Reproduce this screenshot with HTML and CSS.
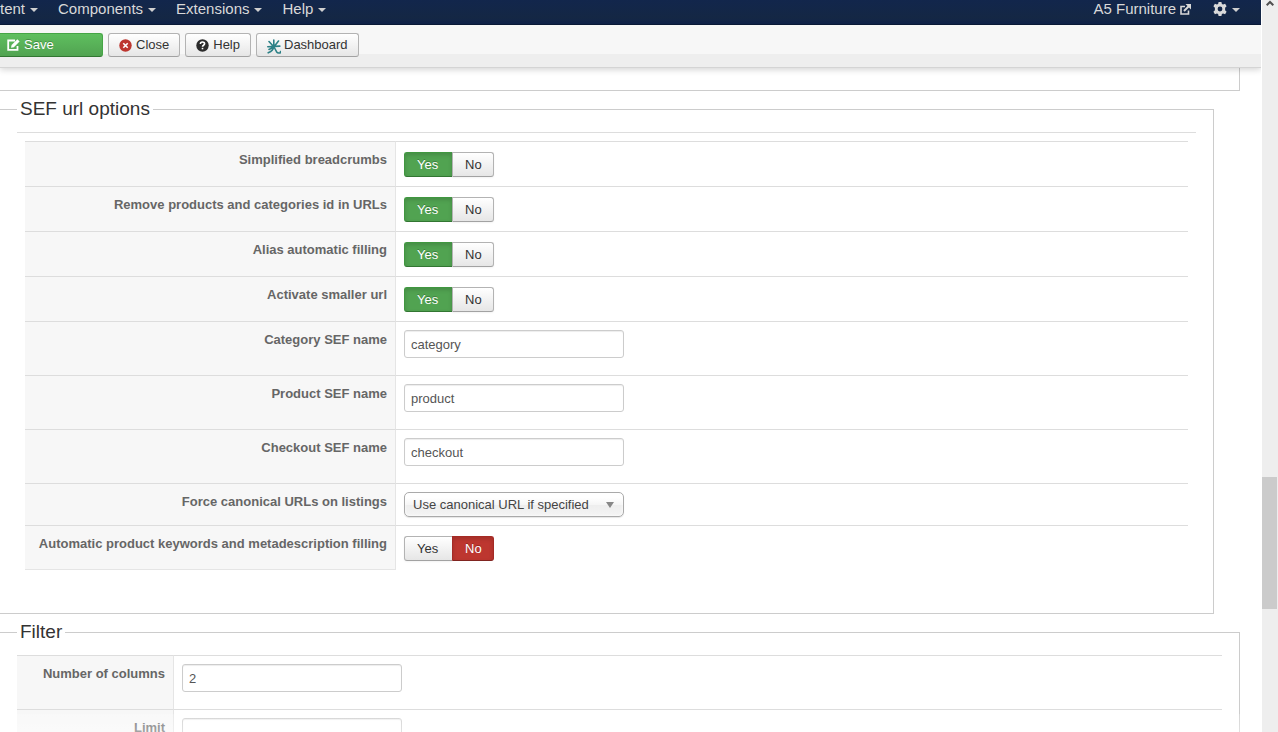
FILE: index.html
```
<!DOCTYPE html>
<html lang="en">
<head>
    <meta charset="UTF-8">
    <meta name="viewport" content="width=device-width, initial-scale=1.0">
    <title>Configuration</title>
    <link rel="stylesheet" href="styles.css">
</head>

<body>
    <div class="page">
        <nav class="navbar">
            <a href="#" class="nav-link">tent <span class="caret"></span></a>
            <a href="#" class="nav-link">Components <span class="caret"></span></a>
            <a href="#" class="nav-link">Extensions <span class="caret"></span></a>
            <a href="#" class="nav-link">Help <span class="caret"></span></a>
            <div class="nav-right">
                <a href="#" class="nav-link site-link">A5 Furniture
                    <svg width="11" height="11" viewBox="0 0 11 11" fill="none" stroke="currentColor">
                        <path d="M5 2.500H1v7.500h7.500V6.500" stroke-width="1.600"/>
                        <path d="M4 7l5-5" stroke-width="1.900"/>
                        <path d="M5.500 0H11v5.500z" fill="currentColor" stroke="none"/>
                    </svg>
                </a>
                <a href="#" class="nav-link" aria-label="Settings">
                    <svg width="14" height="14" viewBox="0 0 14 14" fill="currentColor" fill-rule="evenodd">
                        <path d="M5.600 0h2.800l.5 2 1.200.6 2-.8 1.500 2.400-1.500 1.500v2.600l1.500 1.500-1.500 2.400-2-.8-1.200.6-.5 2H5.600l-.5-2-1.200-.6-2 .8L.4 9.800l1.500-1.500V5.700L.4 4.200l1.500-2.400 2 .8L5.100 2zM7 4.600a2.400 2.400 0 1 0 0 4.800 2.400 2.400 0 0 0 0-4.800z"/>
                    </svg>
                    <span class="caret"></span>
                </a>
            </div>
        </nav>

        <div class="toolbar">
            <button type="button" class="btn btn-save">
                <svg width="13" height="12" viewBox="0 0 13 12" fill="none" stroke="currentColor">
                    <path d="M8 1.500H1.200v9.300h9.300V7" stroke-width="1.800"/>
                    <path d="M4 8.800l.6-2.800L10.400.3l2.200 2.100L6.800 8.200z" fill="currentColor" stroke="none"/>
                </svg>
                Save
            </button>
            <button type="button" class="btn">
                <svg width="13" height="13" viewBox="0 0 13 13">
                    <circle cx="6.500" cy="6.500" r="6.200" fill="#bd362f"/>
                    <path d="M4.300 4.300l4.400 4.400M8.700 4.300L4.300 8.700" stroke="#fff" stroke-width="1.600"/>
                </svg>
                Close
            </button>
            <button type="button" class="btn">
                <svg width="13" height="13" viewBox="0 0 13 13">
                    <circle cx="6.500" cy="6.500" r="6.200" fill="#2b2b2b"/>
                    <path d="M4.400 5c0-2.600 4.200-2.500 4.200-.2 0 1.500-2.100 1.400-2.100 2.900" fill="none" stroke="#fff" stroke-width="1.600"/>
                    <path d="M5.700 8.800h1.600v1.500H5.700z" fill="#fff"/>
                </svg>
                Help
            </button>
            <button type="button" class="btn btn-dashboard">
                <svg width="14" height="15" viewBox="0 0 14 15" fill="none" stroke="#2c8086" stroke-width="1.600" stroke-linecap="round">
                    <path d="M6.800 1v6.500M2 2.500l3.600 4M11.500 2L8 6.500M.8 7.700l12-.6M6.500 7.500c0 3-2 5-5.300 6.300M6.800 7.500l2.700 5.200c1 1.500 2.500 1.500 4 1v-1.200M5 9l-3 1.500"/>
                </svg>
                Dashboard
            </button>
        </div>

        <main class="content">
            <div class="panel-end"></div>

            <fieldset class="panel panel-nested">
                <legend>SEF url options</legend>
                <div class="panel-inner">
                    <table class="options sef-options">
                        <tr>
                            <th scope="row">Simplified breadcrumbs</th>
                            <td>
                                <div class="toggle" role="radiogroup" aria-label="Simplified breadcrumbs">
                                    <input type="radio" name="breadcrumbs" id="breadcrumbs_yes" value="1" checked>
                                    <label for="breadcrumbs_yes" class="yes">Yes</label>
                                    <input type="radio" name="breadcrumbs" id="breadcrumbs_no" value="0">
                                    <label for="breadcrumbs_no" class="no">No</label>
                                </div>
                            </td>
                        </tr>
                        <tr>
                            <th scope="row">Remove products and categories id in URLs</th>
                            <td>
                                <div class="toggle" role="radiogroup" aria-label="Remove products and categories id in URLs">
                                    <input type="radio" name="remove_id" id="remove_id_yes" value="1" checked>
                                    <label for="remove_id_yes" class="yes">Yes</label>
                                    <input type="radio" name="remove_id" id="remove_id_no" value="0">
                                    <label for="remove_id_no" class="no">No</label>
                                </div>
                            </td>
                        </tr>
                        <tr>
                            <th scope="row">Alias automatic filling</th>
                            <td>
                                <div class="toggle" role="radiogroup" aria-label="Alias automatic filling">
                                    <input type="radio" name="alias" id="alias_yes" value="1" checked>
                                    <label for="alias_yes" class="yes">Yes</label>
                                    <input type="radio" name="alias" id="alias_no" value="0">
                                    <label for="alias_no" class="no">No</label>
                                </div>
                            </td>
                        </tr>
                        <tr>
                            <th scope="row">Activate smaller url</th>
                            <td>
                                <div class="toggle" role="radiogroup" aria-label="Activate smaller url">
                                    <input type="radio" name="smaller_url" id="smaller_url_yes" value="1" checked>
                                    <label for="smaller_url_yes" class="yes">Yes</label>
                                    <input type="radio" name="smaller_url" id="smaller_url_no" value="0">
                                    <label for="smaller_url_no" class="no">No</label>
                                </div>
                            </td>
                        </tr>
                        <tr>
                            <th scope="row"><label for="category_sef">Category SEF name</label></th>
                            <td><input type="text" class="text-box" id="category_sef" value="category"></td>
                        </tr>
                        <tr>
                            <th scope="row"><label for="product_sef">Product SEF name</label></th>
                            <td><input type="text" class="text-box" id="product_sef" value="product"></td>
                        </tr>
                        <tr>
                            <th scope="row"><label for="checkout_sef">Checkout SEF name</label></th>
                            <td><input type="text" class="text-box" id="checkout_sef" value="checkout"></td>
                        </tr>
                        <tr>
                            <th scope="row"><label for="canonical">Force canonical URLs on listings</label></th>
                            <td>
                                <div class="select-box">
                                    <select id="canonical">
                                        <option selected>Use canonical URL if specified</option>
                                    </select>
                                </div>
                            </td>
                        </tr>
                        <tr>
                            <th scope="row">Automatic product keywords and metadescription filling</th>
                            <td>
                                <div class="toggle" role="radiogroup" aria-label="Automatic product keywords and metadescription filling">
                                    <input type="radio" name="keywords" id="keywords_yes" value="1">
                                    <label for="keywords_yes" class="yes">Yes</label>
                                    <input type="radio" name="keywords" id="keywords_no" value="0" checked>
                                    <label for="keywords_no" class="no">No</label>
                                </div>
                            </td>
                        </tr>
                    </table>
                </div>
            </fieldset>

            <fieldset class="panel">
                <legend>Filter</legend>
                <table class="options filter-options">
                    <tr>
                        <th scope="row"><label for="columns">Number of columns</label></th>
                        <td><input type="text" class="text-box" id="columns" value="2"></td>
                    </tr>
                    <tr>
                        <th scope="row"><label for="limit">Limit</label></th>
                        <td><input type="text" class="text-box" id="limit" value=""></td>
                    </tr>
                </table>
            </fieldset>
        </main>
        <div class="bottom-fade"></div>
    </div>

    <div class="scrollbar">
        <svg class="scroll-up" width="8" height="6" viewBox="0 0 8 6" fill="none" stroke="#505050" stroke-width="2">
            <path d="M.7 5.300L4 2l3.300 3.300"/>
        </svg>
        <div class="scroll-thumb"></div>
    </div>
</body>
</html>
```

FILE: styles.css
```
* {
    box-sizing: border-box;
}
body {
    margin: 0;
    display: flex;
    height: 100vh;
    overflow: hidden;
    background: #fff;
    font-family: "Liberation Sans", Arial, sans-serif;
    font-size: 13px;
    line-height: 18px;
    color: #333;
}
input, select, button {
    font-family: inherit;
    font-size: 13px;
    line-height: 18px;
}

/* top menu */
.page {
    position: relative;
    flex: 1;
    min-width: 0;
    overflow: hidden;
}
.navbar {
    display: flex;
    gap: 20px;
    height: 25px;
    background: linear-gradient(#12264c, #142744 75%, #10224a);
    border-bottom: 1px solid #0b1a38;
}
.nav-link {
    display: flex;
    align-items: center;
    gap: 5px;
    height: 18px;
    font-size: 15px;
    color: #d9d9d9;
    text-decoration: none;
}
.nav-right {
    display: flex;
    gap: 22px;
    margin-left: auto;
    padding-right: 21px;
}
.site-link {
    gap: 4px;
}
.caret {
    margin-top: 2px;
    border-left: 4px solid transparent;
    border-right: 4px solid transparent;
    border-top: 4px solid #d0d0d0;
}

/* toolbar */
.toolbar {
    position: relative;
    z-index: 1;
    display: flex;
    gap: 5px;
    height: 43px;
    padding-top: 8px;
    background: linear-gradient(#f7f7f7 29px, #eee 29px);
    border-bottom: 1px solid #d4d4d4;
    box-shadow: 0 2px 6px rgba(0, 0, 0, 0.16);
}
.btn {
    display: flex;
    align-items: center;
    gap: 4px;
    height: 24px;
    padding: 0 10px;
    border: 1px solid #b3b3b3;
    border-bottom-color: #a2a2a2;
    border-radius: 3px;
    background: linear-gradient(#fff, #e6e6e6);
    color: #333;
    cursor: pointer;
}
.btn-save {
    width: 103px;
    padding: 0 7px;
    border-color: #46a546;
    border-bottom-color: #327632;
    border-left: none;
    border-radius: 0 3px 3px 0;
    background: linear-gradient(#5fbf5f, #51a351);
    color: #fff;
    text-shadow: 0 -1px 0 rgba(0, 0, 0, 0.25);
}
.btn-dashboard {
    gap: 3px;
}
.btn-dashboard svg {
    margin-top: 3px;
}

/* panels */
.panel-end {
    height: 23px;
    margin-right: 21px;
    border: 1px solid #ccc;
    border-top: none;
    border-left: none;
}
.panel {
    min-width: 0;
    margin: 0 21px 0 0;
    padding: 5px 17px 0 17px;
    border: 1px solid #ccc;
    border-left: none;
}
.panel-nested {
    margin-right: 47px;
    padding-bottom: 43px;
}
legend {
    padding: 0 3px;
    font-size: 19px;
    line-height: 36px;
}
.panel-inner {
    padding: 8px 8px 0;
    border-top: 1px solid #ddd;
}

/* option rows */
.options {
    width: 100%;
    border-spacing: 0;
}
.options th, .options td {
    padding: 8px;
    border-top: 1px solid #ddd;
    vertical-align: top;
}
.options th {
    padding: 9px 8px 7px;
    border-right: 1px solid #e5e5e5;
    background: #f7f7f7;
    color: #666;
    text-align: right;
    white-space: nowrap;
}
.sef-options th {
    width: 371px;
}
.sef-options tr:last-child th {
    border-bottom: 1px solid #e5e5e5;
}
.filter-options th {
    width: 157px;
}
.text-box {
    display: block;
    width: 220px;
    height: 28px;
    margin-bottom: 9px;
    padding: 4px 6px;
    border: 1px solid #ccc;
    border-radius: 3px;
    box-shadow: inset 0 1px 1px rgba(0, 0, 0, 0.075);
    color: #555;
}

/* yes / no switch */
.toggle {
    display: flex;
    height: 25px;
    margin: 2px 0 1px;
}
.toggle input {
    position: absolute;
    opacity: 0;
}
.toggle label {
    padding: 2px 12px;
    border: 1px solid #b3b3b3;
    border-bottom-color: #a2a2a2;
    background: linear-gradient(#fff, #e6e6e6);
    box-shadow: 0 1px 2px rgba(0, 0, 0, 0.05);
    line-height: 20px;
    cursor: pointer;
}
.toggle .yes {
    width: 48px;
    border-right: none;
    border-radius: 3px 0 0 3px;
}
.toggle .no {
    width: 42px;
    border-radius: 0 3px 3px 0;
}
.toggle input:checked + label {
    color: #fff;
    box-shadow: inset 0 2px 4px rgba(0, 0, 0, 0.15);
    text-shadow: 0 -1px 0 rgba(0, 0, 0, 0.25);
}
.toggle input:checked + .yes {
    border-color: #409740;
    border-bottom-color: #327632;
    background: #51a351;
}
.toggle input:checked + .no {
    border-color: #a52a25;
    border-bottom-color: #802420;
    background: #bd362f;
}

.select-box {
    position: relative;
    width: 220px;
}
.select-box::after {
    content: "";
    position: absolute;
    top: 10px;
    right: 10px;
    border-left: 4px solid transparent;
    border-right: 4px solid transparent;
    border-top: 6px solid #888;
    pointer-events: none;
}
.select-box select {
    display: block;
    width: 100%;
    height: 25px;
    padding: 1px 8px 0;
    appearance: none;
    border: 1px solid #aaa;
    border-radius: 5px;
    background: linear-gradient(#fff 20%, #f6f6f6 50%, #eee 52%, #f4f4f4);
    box-shadow: inset 0 0 3px #fff, 0 1px 1px rgba(0, 0, 0, 0.1);
    color: #444;
}

.bottom-fade {
    position: absolute;
    left: 0;
    right: 0;
    bottom: 0;
    height: 18px;
    background: linear-gradient(rgba(255, 255, 255, 0.2), rgba(255, 255, 255, 0.4));
    pointer-events: none;
}

/* scroll bar */
.scrollbar {
    display: flex;
    flex-direction: column;
    width: 17px;
    padding-right: 1px;
    border-left: 1px solid #fff;
    background: #eee;
}
.scroll-up {
    align-self: center;
}
.scroll-thumb {
    height: 18%;
    margin-top: 471px;
    background: #cbcbcb;
}
```
